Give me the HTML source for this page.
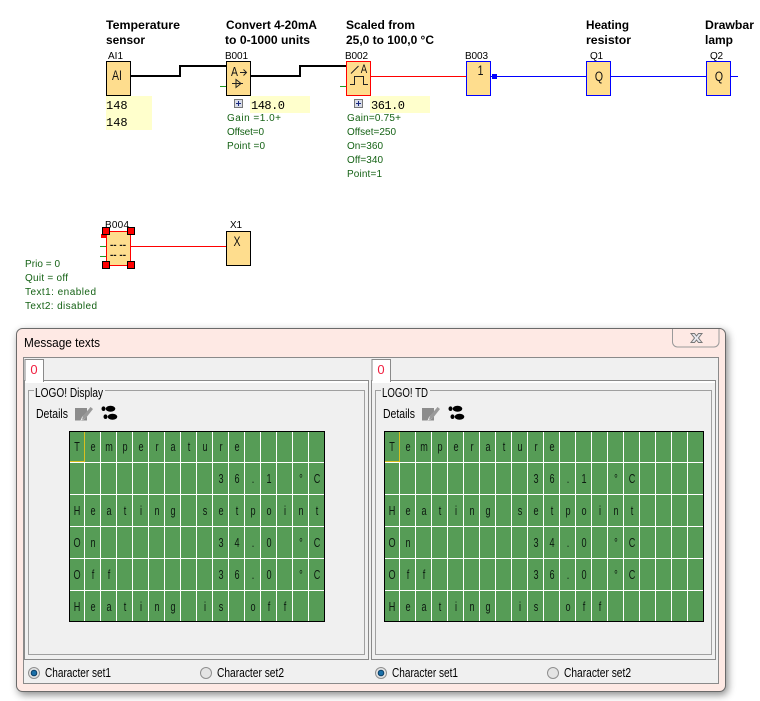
<!DOCTYPE html>
<html><head><meta charset="utf-8"><style>
html,body{margin:0;padding:0;background:#fff;width:760px;height:701px;overflow:hidden}
svg{display:block;position:absolute;left:0;top:0}
.h{font:bold 12px "Liberation Sans",sans-serif;fill:#000}
.l{font:11px "Liberation Sans",sans-serif;fill:#000}
.b{font:14px "Liberation Sans",sans-serif;fill:#111;text-anchor:middle}
.v{font:12px "Liberation Mono",monospace;fill:#000}
.p{font:10px "Liberation Sans",sans-serif;fill:#156215}
.u{font:13px "Liberation Sans",sans-serif;fill:#000}
.c{font:13px "Liberation Sans",sans-serif;fill:#0c1a10;text-anchor:middle}
</style></head><body>
<svg width="760" height="701" viewBox="0 0 760 701" xmlns="http://www.w3.org/2000/svg">
<rect width="760" height="701" fill="#fff"/>
<text class="h" x="106" y="29" textLength="74" lengthAdjust="spacingAndGlyphs">Temperature</text>
<text class="h" x="106" y="44" textLength="39" lengthAdjust="spacingAndGlyphs">sensor</text>
<text class="h" x="226" y="29" textLength="91" lengthAdjust="spacingAndGlyphs">Convert 4-20mA</text>
<text class="h" x="225" y="44" textLength="85" lengthAdjust="spacingAndGlyphs">to 0-1000 units</text>
<text class="h" x="346" y="29" textLength="69" lengthAdjust="spacingAndGlyphs">Scaled from</text>
<text class="h" x="346" y="44" textLength="88" lengthAdjust="spacingAndGlyphs">25,0 to 100,0 °C</text>
<text class="h" x="586" y="29" textLength="43" lengthAdjust="spacingAndGlyphs">Heating</text>
<text class="h" x="586" y="44" textLength="45" lengthAdjust="spacingAndGlyphs">resistor</text>
<text class="h" x="705" y="29" textLength="49" lengthAdjust="spacingAndGlyphs">Drawbar</text>
<text class="h" x="705" y="44" textLength="28" lengthAdjust="spacingAndGlyphs">lamp</text>
<text class="l" x="108" y="59" textLength="15" lengthAdjust="spacingAndGlyphs" style="font-size:10px">AI1</text>
<text class="l" x="225" y="59" textLength="23" lengthAdjust="spacing" style="font-size:10px">B001</text>
<text class="l" x="345" y="59" textLength="23" lengthAdjust="spacing" style="font-size:10px">B002</text>
<text class="l" x="465" y="59" textLength="23" lengthAdjust="spacing" style="font-size:10px">B003</text>
<text class="l" x="590" y="59" textLength="13" lengthAdjust="spacing" style="font-size:10px">Q1</text>
<text class="l" x="710" y="59" textLength="13" lengthAdjust="spacing" style="font-size:10px">Q2</text>
<text class="l" x="105" y="228" textLength="24" lengthAdjust="spacing" style="font-size:10px">B004</text>
<text class="l" x="230" y="228" textLength="12" lengthAdjust="spacing" style="font-size:10px">X1</text>

<path d="M131 76H180V66H226M251 76H300V66H346" fill="none" stroke="#000" stroke-width="2"/>
<path d="M371 76.500H466M131 246.500H226" fill="none" stroke="#f00"/>
<path d="M491 76.500H738" fill="none" stroke="#00f"/>
<rect x="492" y="74" width="5" height="5" fill="#00f"/>
<path d="M220 86.500H226M340 86.500H346M100 246.500H106M100 256.500H106" stroke="#1f9a1f"/>

<g fill="#fedd8e">
<rect x="106.500" y="61.500" width="24" height="34" stroke="#000"/>
<rect x="226.500" y="61.500" width="24" height="34" stroke="#000"/>
<rect x="346.500" y="61.500" width="24" height="34" stroke="#f00"/>
<rect x="466.500" y="61.500" width="24" height="34" stroke="#00f"/>
<rect x="586.500" y="61.500" width="24" height="34" stroke="#00f"/>
<rect x="706.500" y="61.500" width="24" height="34" stroke="#00f"/>
<rect x="226.500" y="231.500" width="24" height="34" stroke="#000"/>
<rect x="106.500" y="231.500" width="24" height="34" stroke="#f00"/>
</g>
<text class="b" transform="translate(117 80) scale(.75 1)">AI</text>
<text class="b" transform="translate(480.500 75) scale(.75 1)">1</text>
<text class="b" transform="translate(599 81) scale(.75 1)">Q</text>
<text class="b" transform="translate(719 81) scale(.75 1)">Q</text>
<text class="b" transform="translate(237 246) scale(.75 1)">X</text>
<text class="b" x="118" y="248" style="font-size:10px;font-weight:bold">-- --</text>
<text class="b" x="118" y="258" style="font-size:10px;font-weight:bold">-- --</text>
<text class="b" transform="translate(234.500 76) scale(.8 1)" style="font-size:13px">A</text>
<path d="M240 72.500H246.500M243.500 69.500L246.500 72.500L243.500 75.500M232 83.500H243M236 79.500V87.500L241 83.500Z" fill="none" stroke="#222"/>
<text class="b" transform="translate(364 73) scale(.8 1)" style="font-size:12px">A</text>
<path d="M351 73.500L358.500 66M350 84.500H354.500V76.500H363.500V84.500H368" fill="none" stroke="#222"/>

<rect x="106" y="96" width="46" height="34" fill="#ffffcc"/>
<rect x="250" y="96" width="60" height="17" fill="#ffffcc"/>
<rect x="370" y="96" width="60" height="17" fill="#ffffcc"/>
<text class="v" x="106" y="109">148</text>
<text class="v" x="106" y="126">148</text>
<text class="v" x="251" y="109" textLength="34">148.0</text>
<text class="v" x="371" y="109" textLength="34">361.0</text>
<g fill="#d8dce8" stroke="#777"><rect x="234.500" y="99.500" width="8" height="8"/><rect x="354.500" y="99.500" width="8" height="8"/></g>
<path d="M236 103.500H241M238.500 101V106M356 103.500H361M358.500 101V106" stroke="#1a2a80"/>

<text class="p" x="227" y="121" textLength="54" lengthAdjust="spacing">Gain =1.0+</text>
<text class="p" x="227" y="135" textLength="37" lengthAdjust="spacing">Offset=0</text>
<text class="p" x="227" y="149" textLength="38" lengthAdjust="spacing">Point =0</text>
<text class="p" x="347" y="121" textLength="54" lengthAdjust="spacing">Gain=0.75+</text>
<text class="p" x="347" y="135" textLength="49" lengthAdjust="spacing">Offset=250</text>
<text class="p" x="347" y="149" textLength="36" lengthAdjust="spacing">On=360</text>
<text class="p" x="347" y="163" textLength="36" lengthAdjust="spacing">Off=340</text>
<text class="p" x="347" y="177" textLength="35" lengthAdjust="spacing">Point=1</text>
<text class="p" x="25" y="267" textLength="35" lengthAdjust="spacing">Prio = 0</text>
<text class="p" x="25" y="281" textLength="43" lengthAdjust="spacing">Quit = off</text>
<text class="p" x="25" y="295" textLength="71" lengthAdjust="spacing">Text1: enabled</text>
<text class="p" x="25" y="309" textLength="72" lengthAdjust="spacing">Text2: disabled</text>

<rect x="101" y="234" width="5" height="4" fill="#f00"/>
<g fill="#f00" stroke="#000"><rect x="102.500" y="227.500" width="7" height="7"/><rect x="127.500" y="227.500" width="7" height="7"/><rect x="102.500" y="261.500" width="7" height="7"/><rect x="127.500" y="261.500" width="7" height="7"/></g>

<!-- window -->
<rect x="16.500" y="328.500" width="709" height="363" rx="6" fill="#fee9e4" stroke="#6a6a6a" style="filter:drop-shadow(2px 3px 4px rgba(0,0,0,.45))"/>
<path d="M672.500 329V342a5 5 0 0 0 5 5H714a5 5 0 0 0 5-5V329" fill="#fee9e4" stroke="#9a9a9a"/>
<path d="M691 333.500h3.500l2 2.500 2-2.500h3.500l-3.500 4.500 3.500 4.500h-3.500l-2-2.500-2 2.500h-3.500l3.500-4.500z" fill="#e8e8ee" stroke="#777"/>
<text class="u" x="24" y="347" textLength="76" lengthAdjust="spacingAndGlyphs">Message texts</text>
<rect x="23.500" y="357.500" width="695" height="326" fill="#f0f0f0" stroke="#8a8a8a"/>

<rect x="24.500" y="380.500" width="344" height="279" fill="#f0f0f0" stroke="#8a8a8a"/>
<rect x="371.500" y="380.500" width="344" height="279" fill="#f0f0f0" stroke="#8a8a8a"/>
<path d="M25 382H368M372 382H715" stroke="#fff" stroke-width="2"/>
<path d="M25 381V359.500H43.500V382M372 381V359.500H390.500V382" fill="#fff" stroke="#8a8a8a"/>
<rect x="26" y="360" width="17" height="23" fill="#fff"/><rect x="373" y="360" width="17" height="23" fill="#fff"/>
<text x="34" y="374" text-anchor="middle" style="font:13px 'Liberation Sans',sans-serif;fill:#f02040">0</text>
<text x="381" y="374" text-anchor="middle" style="font:13px 'Liberation Sans',sans-serif;fill:#f02040">0</text>
<rect x="28.500" y="390.500" width="336" height="264" fill="none" stroke="#a0a0a0"/>
<rect x="375.500" y="390.500" width="336" height="264" fill="none" stroke="#a0a0a0"/>
<rect x="34" y="388" width="71" height="6" fill="#f0f0f0"/><rect x="381" y="388" width="49" height="6" fill="#f0f0f0"/>
<text class="u" x="35" y="397" textLength="68" lengthAdjust="spacingAndGlyphs">LOGO! Display</text>
<text class="u" x="382" y="397" textLength="46" lengthAdjust="spacingAndGlyphs">LOGO! TD</text>
<text class="u" x="36" y="418" textLength="32" lengthAdjust="spacingAndGlyphs">Details</text>
<text class="u" x="383" y="418" textLength="32" lengthAdjust="spacingAndGlyphs">Details</text>
<g><path d="M75 408H87V412L82 417L80.500 420.500L84.500 419L87 416.500V420.500H75Z" fill="#8c8c8c"/><path d="M83 416L90.500 407L93 409L85.500 418.500L82 419.500Z" fill="#9a9a9a"/>
<g fill="#000"><ellipse cx="103.500" cy="408.700" rx="2" ry="2.300"/><ellipse cx="110.500" cy="408.700" rx="4.800" ry="3"/><ellipse cx="105.500" cy="416.700" rx="2" ry="2.300"/><ellipse cx="112.500" cy="416.700" rx="4.800" ry="3"/></g></g>
<g transform="translate(347 0)"><path d="M75 408H87V412L82 417L80.500 420.500L84.500 419L87 416.500V420.500H75Z" fill="#8c8c8c"/><path d="M83 416L90.500 407L93 409L85.500 418.500L82 419.500Z" fill="#9a9a9a"/>
<g fill="#000"><ellipse cx="103.500" cy="408.700" rx="2" ry="2.300"/><ellipse cx="110.500" cy="408.700" rx="4.800" ry="3"/><ellipse cx="105.500" cy="416.700" rx="2" ry="2.300"/><ellipse cx="112.500" cy="416.700" rx="4.800" ry="3"/></g></g>

<!-- LCD left -->
<rect x="69.500" y="431.500" width="255" height="190" fill="#569c56" stroke="#000"/>
<path d="M70 462.500H324M70 494.500H324M70 526.500H324M70 558.500H324M70 590.500H324M84.500 432V621M100.500 432V621M116.500 432V621M132.500 432V621M148.500 432V621M164.500 432V621M180.500 432V621M196.500 432V621M212.500 432V621M228.500 432V621M244.500 432V621M260.500 432V621M276.500 432V621M292.500 432V621M308.500 432V621" stroke="#fff" fill="none"/>
<path d="M84.500 432V461.500H70" stroke="#d8c020" fill="none"/>
<g transform="scale(.7 1)">
<text class="c" x="110 132.860 155.710 178.570 201.430 224.290 247.140 270 292.860 315.710 338.570" y="451">Temperature</text>
<text class="c" x="315.710 338.570 361.430 384.290" y="483">36.1</text><text class="c" x="430 452.860" y="483">°C</text>
<text class="c" x="110 132.860 155.710 178.570 201.430 224.290 247.140 270 292.860 315.710 338.570 361.430 384.290 407.140 430 452.860" y="515">Heating setpoint</text>
<text class="c" x="110 132.860" y="547">On</text><text class="c" x="315.710 338.570 361.430 384.290" y="547">34.0</text><text class="c" x="430 452.860" y="547">°C</text>
<text class="c" x="110 132.860 155.710" y="579">Off</text><text class="c" x="315.710 338.570 361.430 384.290" y="579">36.0</text><text class="c" x="430 452.860" y="579">°C</text>
<text class="c" x="110 132.860 155.710 178.570 201.430 224.290 247.140 270 292.860 315.710 338.570 361.430 384.290 407.140" y="611">Heating is off</text>
</g>

<!-- LCD right -->
<rect x="384.500" y="431.500" width="319" height="190" fill="#569c56" stroke="#000"/>
<path d="M385 462.500H703M385 494.500H703M385 526.500H703M385 558.500H703M385 590.500H703M399.500 432V621M415.500 432V621M431.500 432V621M447.500 432V621M463.500 432V621M479.500 432V621M495.500 432V621M511.500 432V621M527.500 432V621M543.500 432V621M559.500 432V621M575.500 432V621M591.500 432V621M607.500 432V621M623.500 432V621M639.500 432V621M655.500 432V621M671.500 432V621M687.500 432V621" stroke="#fff" fill="none"/>
<path d="M399.500 432V461.500H385" stroke="#d8c020" fill="none"/>
<g transform="scale(.7 1)">
<text class="c" x="560 582.860 605.710 628.570 651.430 674.290 697.140 720 742.860 765.710 788.570" y="451">Temperature</text>
<text class="c" x="765.710 788.570 811.430 834.290" y="483">36.1</text><text class="c" x="880 902.860" y="483">°C</text>
<text class="c" x="560 582.860 605.710 628.570 651.430 674.290 697.140 720 742.860 765.710 788.570 811.430 834.290 857.140 880 902.860" y="515">Heating setpoint</text>
<text class="c" x="560 582.860" y="547">On</text><text class="c" x="765.710 788.570 811.430 834.290" y="547">34.0</text><text class="c" x="880 902.860" y="547">°C</text>
<text class="c" x="560 582.860 605.710" y="579">Off</text><text class="c" x="765.710 788.570 811.430 834.290" y="579">36.0</text><text class="c" x="880 902.860" y="579">°C</text>
<text class="c" x="560 582.860 605.710 628.570 651.430 674.290 697.140 720 742.860 765.710 788.570 811.430 834.290 857.140" y="611">Heating is off</text>
</g>

<!-- radios -->
<g fill="#e4e4e4" stroke="#8f8f8f"><circle cx="34" cy="673" r="5.500"/><circle cx="206" cy="673" r="5.500"/><circle cx="381" cy="673" r="5.500"/><circle cx="553" cy="673" r="5.500"/></g>
<g fill="#1a6fa8" stroke="#0c3f66"><circle cx="34" cy="673" r="2.800"/><circle cx="381" cy="673" r="2.800"/></g>
<text class="u" x="45" y="677" textLength="66" lengthAdjust="spacingAndGlyphs">Character set1</text>
<text class="u" x="217" y="677" textLength="67" lengthAdjust="spacingAndGlyphs">Character set2</text>
<text class="u" x="392" y="677" textLength="66" lengthAdjust="spacingAndGlyphs">Character set1</text>
<text class="u" x="564" y="677" textLength="67" lengthAdjust="spacingAndGlyphs">Character set2</text>
</svg>
</body></html>
